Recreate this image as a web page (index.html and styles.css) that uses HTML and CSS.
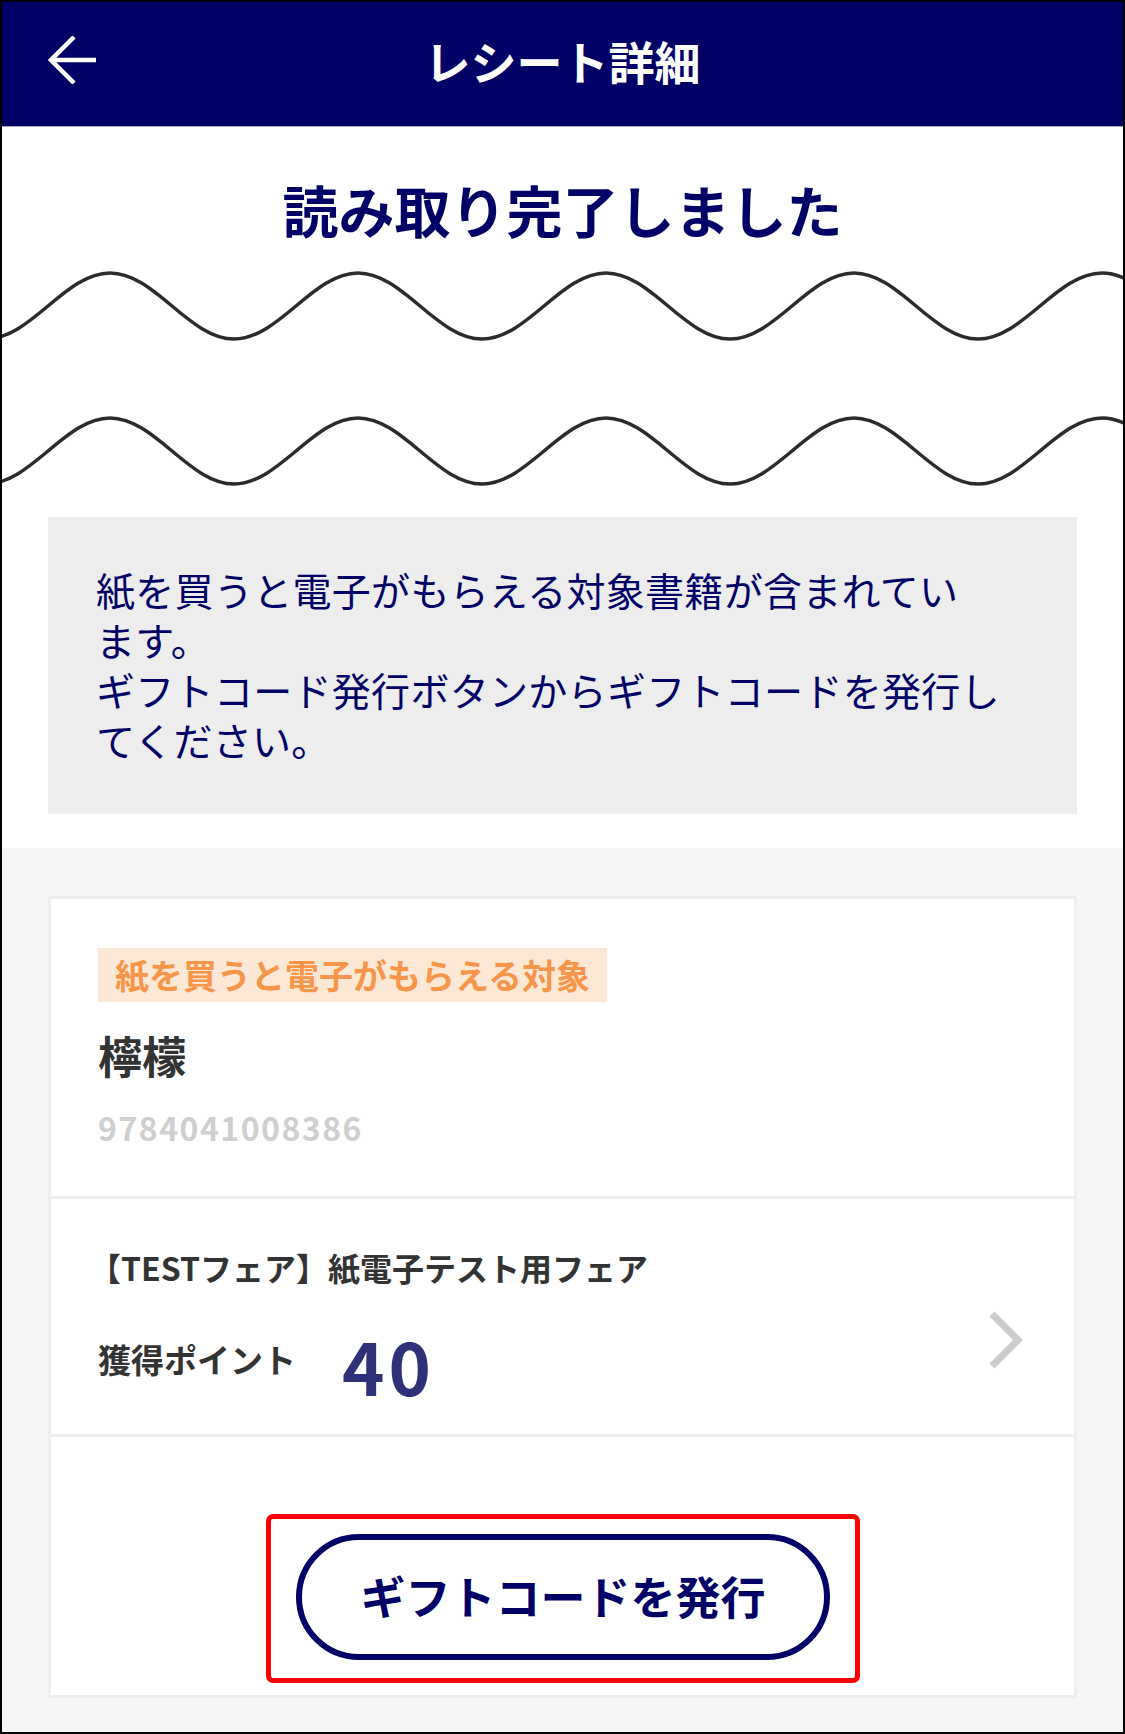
FILE: index.html
```html
<!DOCTYPE html>
<html lang="ja">
<head>
    <meta charset="UTF-8">
    <meta name="viewport" content="width=device-width, initial-scale=1.0">
    <title>レシート詳細</title>
    <link rel="stylesheet" href="styles.css">
</head>
<body>
    <div class="screen">
        <header class="app-header">
            <a class="back" href="#" aria-label="戻る">
                <svg viewBox="0 0 48 48" fill="none" stroke="currentColor" stroke-width="4.5">
                    <path d="M3 24H48M26 1L3 24L26 47"></path>
                </svg>
            </a>
            <h1 class="app-title">レシート詳細</h1>
            <span></span>
        </header>

        <!-- 読み取り結果 -->
        <section class="result">
            <h2 class="result-title">読み取り完了しました</h2>
            <svg class="wave" viewBox="0 0 1121 70" fill="none" stroke="#2b2b2b" stroke-width="3.5">
                <path d="M-140 2c45 0 79 66 124 66s79-66 124-66s79 66 124 66s79-66 124-66s79 66 124 66s79-66 124-66s79 66 124 66s79-66 124-66s79 66 124 66s79-66 124-66s79 66 124 66"></path>
            </svg>
            <svg class="wave wave-second" viewBox="0 0 1121 70" fill="none" stroke="#2b2b2b" stroke-width="3.5">
                <path d="M-140 2c45 0 79 66 124 66s79-66 124-66s79 66 124 66s79-66 124-66s79 66 124 66s79-66 124-66s79 66 124 66s79-66 124-66s79 66 124 66s79-66 124-66s79 66 124 66"></path>
            </svg>
            <div class="notice">
                紙を買うと電子がもらえる対象書籍が含まれてい<br>ます。<br>ギフトコード発行ボタンからギフトコードを発行し<br>てください。
            </div>
        </section>

        <!-- 対象書籍 -->
        <section class="detail">
            <div class="card">
                <div class="card-row book">
                    <span class="tag">紙を買うと電子がもらえる対象</span>
                    <p class="book-title">檸檬</p>
                    <p class="isbn">9784041008386</p>
                </div>
                <a class="card-row fair" href="#">
                    <div class="fair-body">
                        <p class="fair-name">【TESTフェア】紙電子テスト用フェア</p>
                        <div class="points">
                            <span class="points-label">獲得ポイント</span>
                            <span class="points-value">40</span>
                        </div>
                    </div>
                    <svg class="chevron" viewBox="0 0 40 60" fill="none" stroke="#cccccc" stroke-width="7">
                        <path d="M4 4L30 30L4 56"></path>
                    </svg>
                </a>
                <div class="card-row action">
                    <div class="highlight">
                        <button class="gift-button">ギフトコードを発行</button>
                    </div>
                </div>
            </div>
        </section>
    </div>
</body>
</html>
```

FILE: styles.css
```css
* {
    box-sizing: border-box;
}

body {
    margin: 0;
    font-family: "Noto Sans CJK JP", "Noto Sans", sans-serif;
    background: #ffffff;
}

p {
    margin: 0;
}

.screen {
    width: 1125px;
    height: 1734px;
    border: 2px solid #000000;
    display: flex;
    flex-direction: column;
    overflow: hidden;
}

/* header */
.app-header {
    height: 125px;
    padding: 0 46px 8px;
    background-color: #000066;
    border-bottom: 1px solid #aaaaaa;
    display: grid;
    grid-template-columns: 1fr auto 1fr;
    align-items: center;
}

.back {
    color: #ffffff;
    width: 48px;
    height: 48px;
    display: block;
}

.back svg {
    width: 48px;
    height: 48px;
    display: block;
}

.app-title {
    margin: 0;
    color: #ffffff;
    font-size: 46px;
    font-weight: bold;
    line-height: 60px;
}

/* result */
.result {
    padding: 48px 46px 34px;
    background: #ffffff;
}

.result-title {
    margin: 0;
    text-align: center;
    color: #000066;
    font-size: 56px;
    font-weight: bold;
    line-height: 67px;
}

.wave {
    display: block;
    width: 1121px;
    height: 70px;
    margin: 29px -46px 0;
}

.wave-second {
    margin-top: 75px;
}

.notice {
    margin-top: 31px;
    padding: 47px 48px 50px;
    background-color: #ededed;
    color: #000066;
    font-size: 39px;
    line-height: 50px;
    letter-spacing: 0.3px;
}

/* detail */
.detail {
    flex: 1;
    padding: 48px 46px 0;
    background-color: #f6f6f6;
}

.card {
    background: #ffffff;
    border: 3px solid #eeeeee;
}

.card-row {
    display: block;
    padding: 0 46px 0 47px;
    color: #333333;
    text-decoration: none;
}

.card-row + .card-row {
    border-top: 3px solid #eeeeee;
}

.book {
    padding-top: 49px;
    padding-bottom: 49px;
}

.tag {
    display: inline-block;
    padding: 0 17px;
    background-color: #fde8d6;
    color: #f7964b;
    font-size: 34px;
    font-weight: bold;
    line-height: 54px;
}

.book-title {
    margin-top: 23px;
    font-size: 44px;
    font-weight: bold;
    line-height: 60px;
}

.isbn {
    margin-top: 22px;
    color: #cfcfcf;
    font-size: 32px;
    font-weight: bold;
    line-height: 40px;
    letter-spacing: 1.5px;
}

.fair {
    display: flex;
    align-items: center;
    padding-top: 46px;
    padding-bottom: 33px;
}

.fair-body {
    flex: 1;
}

.fair-name {
    font-size: 32px;
    font-weight: bold;
    line-height: 44px;
    text-indent: -9px;
}

.points {
    display: flex;
    align-items: flex-start;
    margin-top: 40px;
}

.points-label {
    margin-top: 8px;
    font-size: 33px;
    font-weight: bold;
    line-height: 44px;
}

.points-value {
    margin-left: 46px;
    color: #2e3078;
    font-size: 72px;
    font-weight: bold;
    line-height: 72px;
    letter-spacing: 4px;
}

.chevron {
    width: 40px;
    height: 60px;
    margin-top: 33px;
}

.action {
    display: flex;
    justify-content: center;
    padding-top: 77px;
    padding-bottom: 12px;
}

.highlight {
    padding: 15px 25px 18px;
    border: 5px solid #ff0000;
    border-radius: 7px;
}

.gift-button {
    display: block;
    width: 534px;
    height: 126px;
    padding: 0 0 4px;
    border: 6px solid #000066;
    border-radius: 63px;
    background: #ffffff;
    color: #000066;
    font-family: inherit;
    font-size: 45px;
    font-weight: bold;
    cursor: pointer;
}
```
